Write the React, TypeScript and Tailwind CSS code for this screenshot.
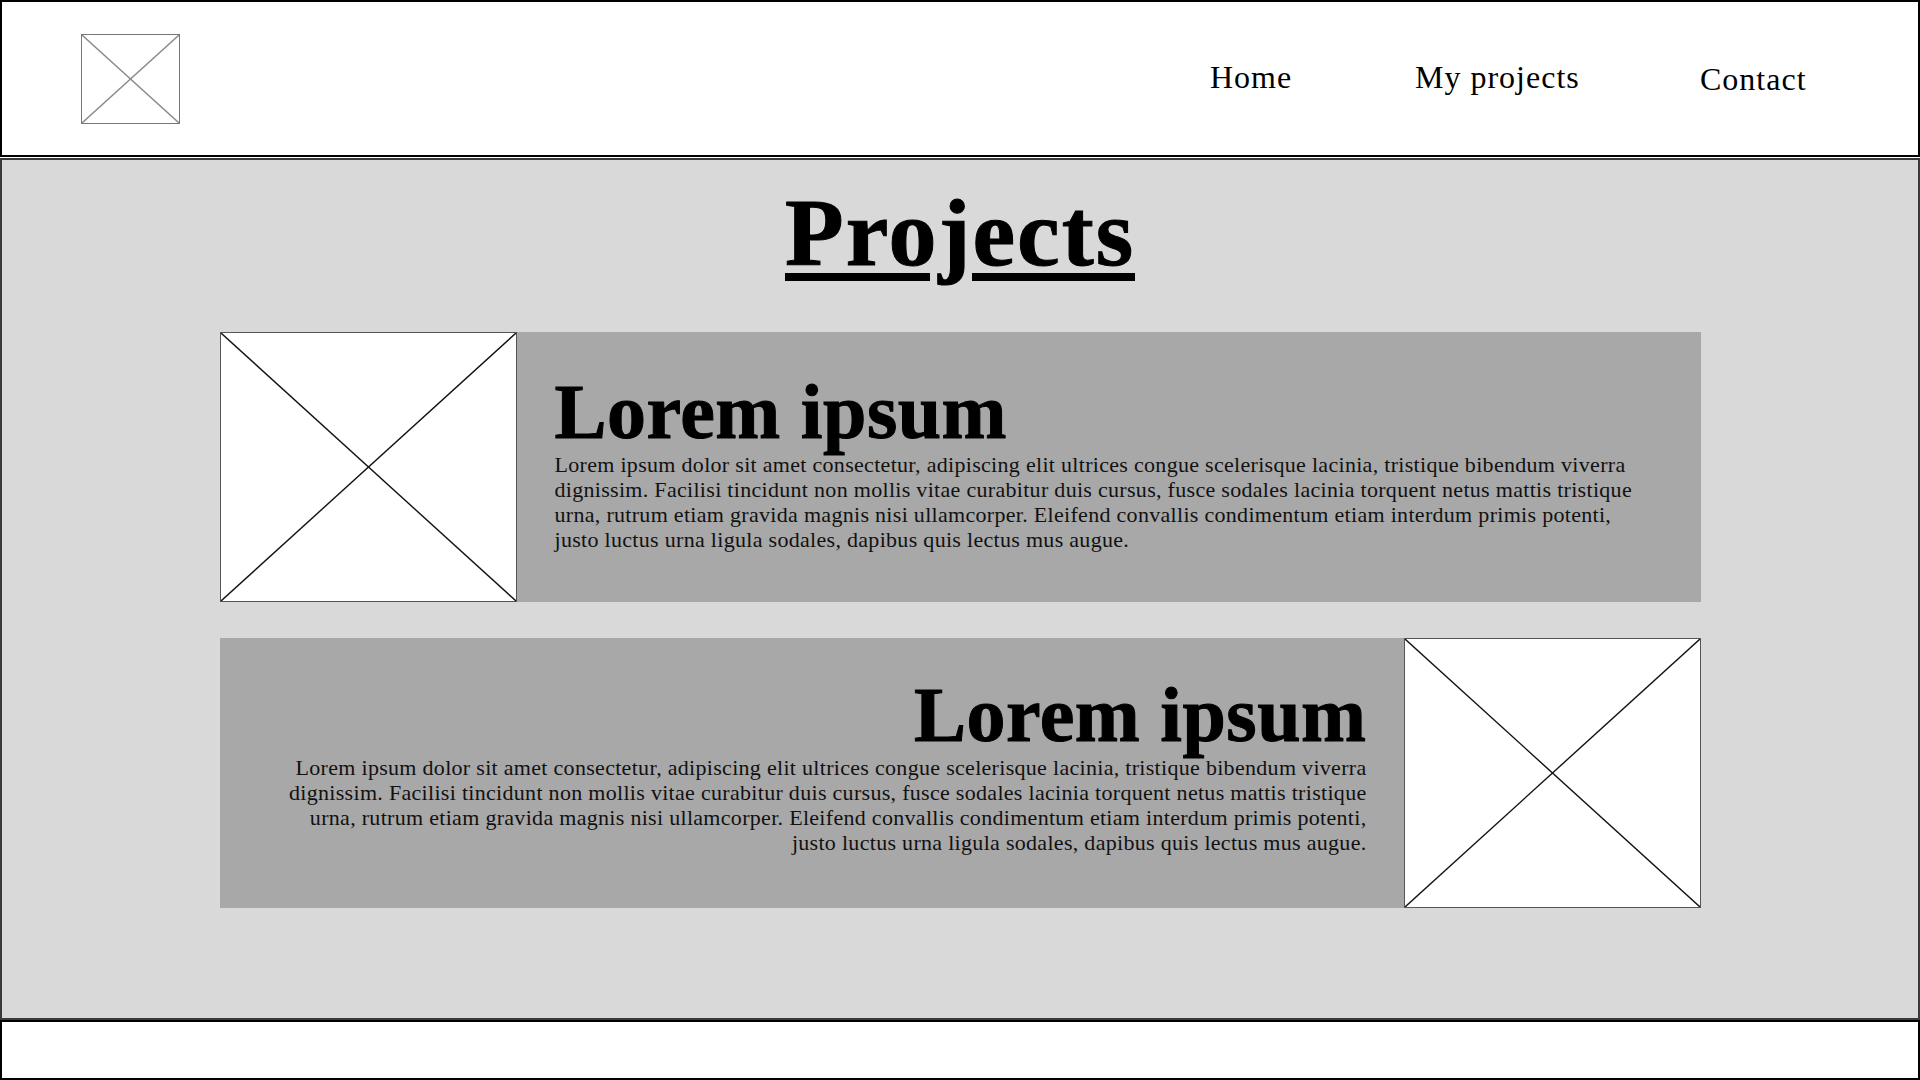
const LINES = [
  "Lorem ipsum dolor sit amet consectetur, adipiscing elit ultrices congue scelerisque lacinia, tristique bibendum viverra",
  "dignissim. Facilisi tincidunt non mollis vitae curabitur duis cursus, fusce sodales lacinia torquent netus mattis tristique",
  "urna, rutrum etiam gravida magnis nisi ullamcorper. Eleifend convallis condimentum etiam interdum primis potenti,",
  "justo luctus urna ligula sodales, dapibus quis lectus mus augue.",
];

const Placeholder = ({ className, stroke }: { className: string; stroke: string }) => (
  <div className={className}>
    <svg className="block w-full h-full" viewBox="0 0 100 100" preserveAspectRatio="none">
      <line x1="0" y1="0" x2="100" y2="100" stroke={stroke} strokeWidth="1.4" vectorEffect="non-scaling-stroke" />
      <line x1="100" y1="0" x2="0" y2="100" stroke={stroke} strokeWidth="1.4" vectorEffect="non-scaling-stroke" />
    </svg>
  </div>
);

const Card = ({ reverse }: { reverse?: boolean }) => {
  const image = (
    <Placeholder
      className="w-[297px] h-[270px] shrink-0 bg-white border border-[#555]"
      stroke="#111"
    />
  );
  return (
    <div className="flex h-[270px] w-[1481px] mx-auto">
      {!reverse && image}
      <div
        className={
          reverse
            ? "flex-1 bg-[#a8a8a8] pt-[38px] pr-[37px] text-right"
            : "flex-1 bg-[#a8a8a8] pt-[41px] pl-[38px] text-left"
        }
      >
        <h2 className="text-[78px] leading-none font-bold text-black tracking-[0.5px] [-webkit-text-stroke:1px_black]">
          Lorem ipsum
        </h2>
        <div className="mt-[1px] text-[22px] leading-[25px] tracking-[0.3px] text-[#111]">
          {LINES.map((line) => (
            <p key={line} className="whitespace-nowrap">
              {line}
            </p>
          ))}
        </div>
      </div>
      {reverse && image}
    </div>
  );
};

export default function App() {
  return (
    <div className="w-[1920px] h-[1080px] bg-white flex flex-col font-['Liberation_Serif',serif] text-black">
      {/* Header */}
      <header className="h-[157px] shrink-0 border-2 border-black flex items-center">
        <Placeholder className="ml-[79px] w-[99px] h-[90px] border border-[#777]" stroke="#8a8a8a" />
        <nav className="ml-auto w-[708px] flex items-center text-[32px] leading-none tracking-[1px]">
          <span className="w-[205px] -mt-1">Home</span>
          <span className="w-[285px] -mt-1">My projects</span>
          <span>Contact</span>
        </nav>
      </header>

      {/* Projects */}
      <main className="mt-px h-[862px] shrink-0 border-2 border-[#3a3a3a] bg-[#d9d9d9] pt-[25px]">
        <h1 className="text-center text-[96px] leading-none font-bold tracking-[2px] underline decoration-[8px] underline-offset-[8px] [-webkit-text-stroke:1px_black]">
          Projects
        </h1>
        <div className="mt-[51px] flex flex-col gap-[36px]">
          <Card />
          <Card reverse />
        </div>
      </main>

      {/* Footer */}
      <footer className="flex-1 border-2 border-black bg-white" />
    </div>
  );
}
